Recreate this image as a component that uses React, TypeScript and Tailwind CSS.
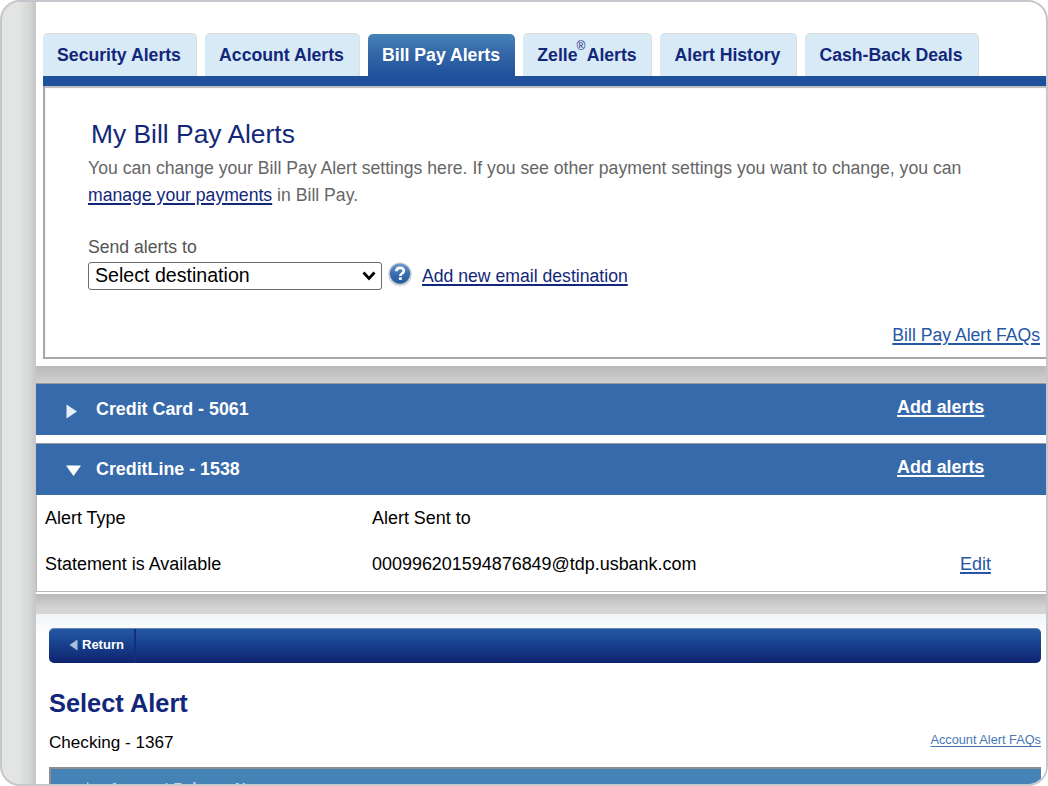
import React from "react";

const tabs = [
  { label: "Security Alerts", box: "w-[154px]", active: false },
  { label: "Account Alerts", box: "w-[155px]", active: false },
  { label: "Bill Pay Alerts", box: "w-[147px]", active: true },
  { label: "Zelle", box: "w-[129px]", active: false },
  { label: "Alert History", box: "w-[137px]", active: false },
  { label: "Cash-Back Deals", box: "w-[174px]", active: false },
];

function Tabs() {
  return (
    <div className="flex h-[43px] gap-2">
      {tabs.map((t) => (
        <button
          key={t.label}
          className={`${t.box} h-[43px] shrink-0 whitespace-nowrap rounded-t-[5px] pr-px pb-[1px] text-center text-[17.65px] leading-[42px] font-bold ${
            t.active
              ? "mt-px bg-linear-to-b from-[#4384b8] via-[#3669a9] via-40% to-[#1f509c] text-white"
              : "border-t border-r border-[#dddddb] bg-[#d9eaf7] text-[#12277a]"
          }`}
        >
          {t.label === "Zelle" ? (
            <span className="pl-px">
              Zelle
              <span className="relative -top-[11px] -mr-[3px] -ml-px text-[12px] leading-none font-normal">®</span> Alerts
            </span>
          ) : (
            t.label
          )}
        </button>
      ))}
    </div>
  );
}

function HelpIcon() {
  return (
    <svg width="26" height="26" viewBox="0 0 26 26" className="-mt-[4px] ml-[5px] shrink-0">
      <defs>
        <linearGradient id="helpFill" x1="0" y1="0" x2="0" y2="1">
          <stop offset="0" stopColor="#6c9bce" />
          <stop offset="0.5" stopColor="#3b6fb0" />
          <stop offset="1" stopColor="#2559a0" />
        </linearGradient>
      </defs>
      <circle cx="13" cy="13.5" r="12" fill="#8f959c" opacity="0.25" />
      <circle cx="13" cy="13" r="11.3" fill="#c4ccd5" />
      <circle cx="13" cy="12.6" r="10.2" fill="url(#helpFill)" />
      <path d="M9.4 10.3c0-4.600 7.400-4.600 7.400-.4 0 2.700-3.500 2.500-3.500 5" fill="none" stroke="#fff" strokeWidth="2.700" />
      <rect x="11.900" y="16.300" width="2.900" height="2.600" fill="#fff" />
    </svg>
  );
}

function AccountBar({ name, open }: { name: string; open: boolean }) {
  return (
    <div className="flex h-[52px] border-t border-[#9a9a98] bg-[#376aab] text-[17.85px] font-bold whitespace-nowrap text-white">
      <div className="flex w-[60px] shrink-0 items-center pt-[3px] pl-[29px]">
        <svg width="16" height="16" viewBox="0 0 16 16">
          {open ? (
            <path d="M1 2.5H16L8.500 13Z" fill="#fff" />
          ) : (
            <path d="M1.500 1.500V15.500L12 8.500Z" fill="#e8effa" />
          )}
        </svg>
      </div>
      <h2 className="w-[801px] shrink-0 leading-[51px]">{name}</h2>
      <a href="#add" className="leading-[46px] underline decoration-[1.5px] underline-offset-2">
        Add alerts
      </a>
    </div>
  );
}

export default function App() {
  return (
    <div className="h-[786px] w-[1048px] bg-white font-['Liberation_Sans',Arial,sans-serif]">
      <div className="flex h-[786px] w-[1048px] overflow-hidden rounded-[20px] border-2 border-[#c8c6cd] bg-[#d2d2d3]">
        <div className="w-[34px] shrink-0 bg-linear-to-r from-[#e3e5e5] from-50% via-[#d6d7d7] via-80% to-[#c5c5c5]" />
        <main className="flex w-[1010px] shrink-0 flex-col">
          <section className="h-[364px] shrink-0 bg-white pt-[31px] pl-[7px]">
            <Tabs />
            <div className="h-[10px] bg-[#1f509c]" />
            <div className="flex h-[273px] flex-col border-b-2 border-l-2 border-[#a8a8a8] pl-[43px] shadow-[inset_0_2px_1px_#bcbcbc]">
              <h1 className="mt-[32px] ml-[3px] text-[26.4px] leading-[32px] text-[#12277a]">My Bill Pay Alerts</h1>
              <p className="mt-[5px] text-[17.64px] leading-[26.5px] whitespace-nowrap text-[#666]">
                You can change your Bill Pay Alert settings here. If you see other payment settings you want to change, you can
                <br />
                <a href="#pay" className="text-[#12277a] underline decoration-[1.5px] underline-offset-2">
                  manage your payments
                </a>{" "}
                in Bill Pay.
              </p>
              <label className="mt-[29px] text-[17.64px] leading-[20px] text-[#555]">Send alerts to</label>
              <div className="mt-[4px] flex h-[30px] items-center">
                <button className="flex h-[28px] w-[294px] shrink-0 items-center justify-between rounded-[3px] border border-[#6b6b6b] pr-[5px] pl-[6px] text-[19.6px] leading-none text-black">
                  <span>Select destination</span>
                  <svg width="14" height="10" viewBox="0 0 14 10">
                    <path d="M1.500 1.500L7 7.500L12.500 1.500" fill="none" stroke="#000" strokeWidth="2.800" />
                  </svg>
                </button>
                <HelpIcon />
                <a href="#email" className="ml-[9px] text-[17.64px] whitespace-nowrap text-[#12277a] underline decoration-[1.5px] underline-offset-2">
                  Add new email destination
                </a>
              </div>
              <a href="#faq" className="mt-[32px] mr-[6px] self-end text-[17.6px] leading-[24px] text-[#2557a4] underline decoration-[1.5px] underline-offset-2">
                Bill Pay Alert FAQs
              </a>
            </div>
          </section>

          <div className="h-[17px] shrink-0 bg-linear-to-b from-[#b9b9b9] to-[#d0d0d1]" />

          <section className="h-[211px] shrink-0 bg-white">
            <AccountBar name="Credit Card - 5061" open={false} />
            <div className="h-[8px]" />
            <AccountBar name="CreditLine - 1538" open />
            <div className="grid h-[97px] grid-cols-[327px_588px_1fr] grid-rows-[46px_46px] border-b border-l border-[#b9b9b9] pl-[8px] text-[17.95px] leading-[46px] whitespace-nowrap text-black">
              <span>Alert Type</span>
              <span>Alert Sent to</span>
              <span />
              <span>Statement is Available</span>
              <span>000996201594876849@tdp.usbank.com</span>
              <a href="#edit" className="text-[#2557a4] underline decoration-[1.5px] underline-offset-2">
                Edit
              </a>
            </div>
          </section>

          <div className="h-[20px] shrink-0 bg-linear-to-b from-[#b9b9b9] to-[#d5d5d6] to-75%" />

          <section className="h-[170px] shrink-0 bg-white bg-linear-to-b from-[#f0f4f7] to-white to-[22px] pt-[14px] pr-[5px] pl-[13px]">
            <div className="flex h-[35px] overflow-hidden rounded-[5px] border-t border-[#6383b4] bg-linear-to-b from-[#2458a4] to-[#0e2370]">
              <button className="flex w-[87px] items-center gap-[4px] border-r-2 border-[#122c80] pb-[2px] pl-[20px] text-[13px] font-bold text-white">
                <svg width="9" height="12" viewBox="0 0 9 12">
                  <path d="M8.500 .5V11.500L.5 6Z" fill="#a9bfdd" />
                </svg>
                Return
              </button>
            </div>
            <h2 className="mt-[24px] text-[25.4px] leading-[32px] font-bold text-[#12277a]">Select Alert</h2>
            <div className="mt-[10px] flex h-[26px] items-start justify-between whitespace-nowrap">
              <span className="text-[17.1px] leading-[28px] text-black">Checking - 1367</span>
              <a href="#afaq" className="text-[12.75px] leading-[21px] text-[#4777b4] underline underline-offset-2">
                Account Alert FAQs
              </a>
            </div>
            <div className="mt-[12px] flex h-[40px] gap-[16px] border-t-2 border-l-2 border-[#8e8e8e] bg-[#4583b7] pt-[9px] pl-[36px] text-[15px] leading-[20px] font-bold text-[#c5d4ea]">
              <svg width="6" height="12" viewBox="0 0 6 12" className="mt-[4px] shrink-0">
                <path d="M0 0V12L6 6Z" fill="#c5d4ea" />
              </svg>
              <span>Account Balance N</span>
            </div>
          </section>
        </main>
      </div>
    </div>
  );
}
